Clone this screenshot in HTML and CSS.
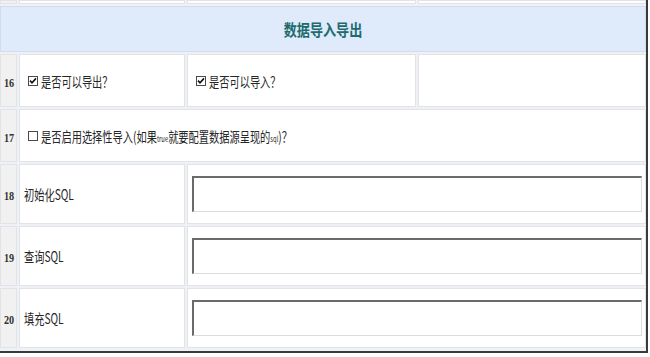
FILE: index.html
```html
<!DOCTYPE html>
<html lang="zh-CN">
<head>
    <meta charset="UTF-8">
    <title>数据导入导出</title>
    <link rel="stylesheet" href="styles.css">
</head>
<body>
    <div class="frame">
        <table class="form-table">
            <colgroup>
                <col class="col-num">
                <col class="col-label">
                <col class="col-mid">
                <col class="col-last">
            </colgroup>
            <tr class="stub">
                <td class="num"></td><td></td><td></td><td></td>
            </tr>
            <tr class="section-row">
                <th colspan="4" class="section"><span class="section-title">数据导入导出</span></th>
            </tr>
            <tr class="row-check">
                <td class="num"><span class="num-txt">16</span></td>
                <td>
                    <label class="check">
                        <svg class="box" width="10" height="10" viewBox="0 0 10 10"><rect x="0.5" y="0.5" width="9" height="9" fill="#fff" stroke="#4a4a4a"/><path d="M2 4.6 L4 6.8 L8 2.4" fill="none" stroke="#111" stroke-width="1.6"/></svg>
                        <span class="txt">是否可以导出？</span>
                    </label>
                </td>
                <td>
                    <label class="check">
                        <svg class="box" width="10" height="10" viewBox="0 0 10 10"><rect x="0.5" y="0.5" width="9" height="9" fill="#fff" stroke="#4a4a4a"/><path d="M2 4.6 L4 6.8 L8 2.4" fill="none" stroke="#111" stroke-width="1.6"/></svg>
                        <span class="txt">是否可以导入？</span>
                    </label>
                </td>
                <td></td>
            </tr>
            <tr class="row-check">
                <td class="num"><span class="num-txt">17</span></td>
                <td colspan="3">
                    <label class="check">
                        <svg class="box" width="10" height="10" viewBox="0 0 10 10"><rect x="0.5" y="0.5" width="9" height="9" fill="#fff" stroke="#4a4a4a"/></svg>
                        <span class="txt">是否启用选择性导入(如果<small>true</small>就要配置数据源呈现的<small>sql</small>)？</span>
                    </label>
                </td>
            </tr>
            <tr class="row-input">
                <td class="num"><span class="num-txt">18</span></td>
                <td><span class="txt">初始化SQL</span></td>
                <td colspan="2" class="field"><input type="text" class="sql-input"></td>
            </tr>
            <tr class="row-input">
                <td class="num"><span class="num-txt">19</span></td>
                <td><span class="txt">查询SQL</span></td>
                <td colspan="2" class="field"><input type="text" class="sql-input"></td>
            </tr>
            <tr class="row-input">
                <td class="num"><span class="num-txt">20</span></td>
                <td><span class="txt">填充SQL</span></td>
                <td colspan="2" class="field"><input type="text" class="sql-input"></td>
            </tr>
        </table>
    </div>
</body>
</html>
```

FILE: styles.css
```css
/* old-style settings form */
body {
    margin: 0;
    padding: 0;
    background-color: #fff;
    font-family: "Noto Sans CJK SC", "Liberation Sans", sans-serif;
    color: #333;
}
.frame {
    width: 646px;
    height: 351px;
    overflow: hidden;
    border-right: 2px solid #3a3a3a;
    border-bottom: 2px solid #3a3a3a;
    background-color: #eef1f5;
}
.form-table {
    margin-left: -2px;
    margin-top: -2px;
    width: 650px;
    table-layout: fixed;
    border-collapse: separate;
    border-spacing: 2px;
}
.col-num { width: 17px; }
.col-label { width: 166px; }
.col-mid { width: 229px; }
.col-last { width: 228px; }
.form-table td, .form-table th {
    background-color: #fff;
    border: 1px solid #e1e3e7;
    padding: 0 4px;
    font-size: 14px;
    font-weight: normal;
    text-align: left;
    vertical-align: middle;
    white-space: nowrap;
}
.form-table td.num {
    background-color: #f1f1f1;
    padding: 0;
    text-align: center;
}
.stub td {
    height: 2px;
    padding: 0;
}
.form-table th.section {
    height: 44px;
    padding: 0;
    background-color: #dfeafb;
    border-color: #d3dcea;
    text-align: center;
}
.section-title {
    display: inline-block;
    font-size: 16px;
    font-weight: bold;
    color: #1e6b6d;
    transform: scaleX(0.82);
}
.row-check td {
    height: 51px;
}
.row-input td {
    height: 58px;
}
.num-txt {
    display: inline-block;
    font-family: "Liberation Serif", serif;
    font-weight: bold;
    font-size: 12px;
    color: #333;
    transform: scaleX(0.85);
}
.txt {
    display: inline-block;
    transform: scaleX(0.73);
    transform-origin: left center;
    color: #262626;
}
.txt small {
    font-size: 8px;
}
.check {
    display: flex;
    align-items: center;
    gap: 3px;
    padding-left: 4px;
}
.check .box {
    flex: none;
}
.form-table td.field {
    padding: 0 3px 0 4px;
}
.sql-input {
    display: block;
    box-sizing: border-box;
    width: 100%;
    height: 36px;
    margin: 0;
    padding: 2px 4px;
    background-color: #fff;
    border-top: 2px solid #6a6a6a;
    border-left: 2px solid #6a6a6a;
    border-right: 1px solid #dcdcdc;
    border-bottom: 1px solid #dcdcdc;
}
```
